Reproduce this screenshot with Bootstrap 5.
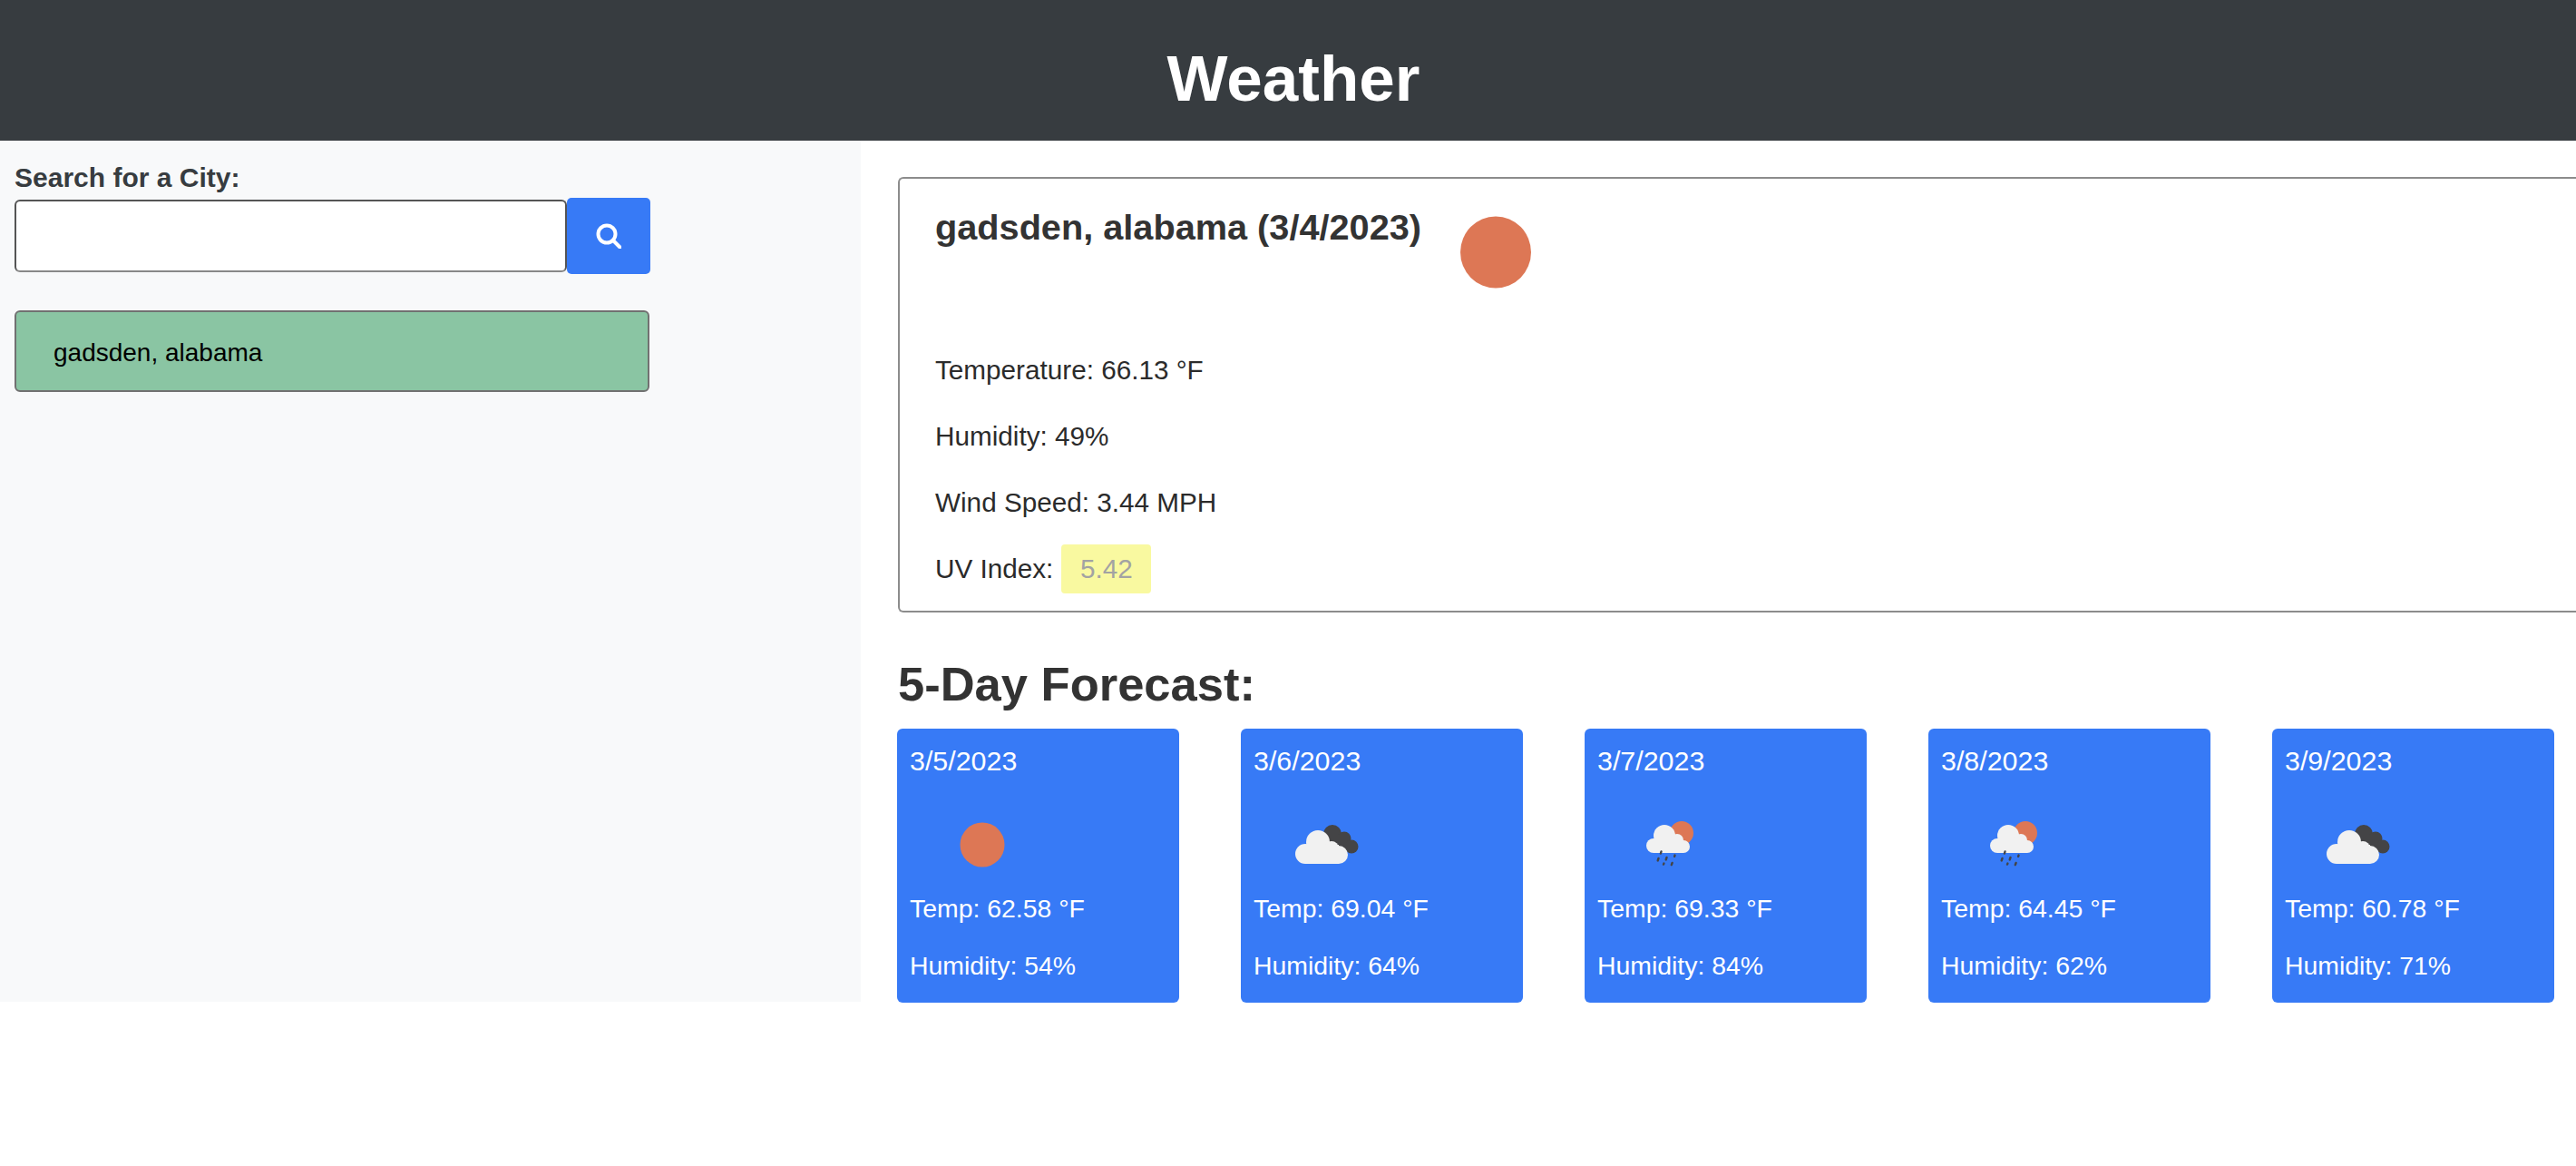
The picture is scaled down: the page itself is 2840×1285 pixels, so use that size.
<!DOCTYPE html>
<html lang="en">
<head>
  <meta charset="UTF-8" />
  <meta name="viewport" content="width=device-width, initial-scale=1.0"/>
  <title>Weather</title>
  <link href="https://cdn.jsdelivr.net/npm/bootstrap@5.3.3/dist/css/bootstrap.min.css" rel="stylesheet" />
  <style>
    body {
      font-family: "Liberation Sans", Arial, sans-serif;
      color: #333;
    }
    .app-header {
      height: 155px;
      background-color: #373c40;
      color: #fff;
      padding: 18px 0 0 12px;
    }
    .app-header h1 {
      font-size: 71px;
      font-weight: 700;
      margin: 0;
    }
    .side-panel {
      flex: 0 0 949px;
      height: 949px;
      background-color: #f8f9fa;
      padding: 24px 16px 0;
    }
    .search-label {
      font-size: 30px;
      font-weight: 700;
      line-height: 34px;
      margin: 0 0 5px;
      color: #373c40;
    }
    .search-input {
      width: 609px;
      height: 80px;
      border: 2px solid #555;
      border-bottom-color: #888;
      border-radius: 6px;
      background: #fff;
    }
    .search-btn {
      width: 92px;
      height: 84px;
      padding: 0;
      background-color: #377af6;
      border: 0;
      border-radius: 5px;
    }
    .history-item {
      width: 700px;
      height: 90px;
      margin-top: 40px;
      padding: 4px 0 0 41px;
      background-color: #8ac5a3;
      border: 2px solid #717171;
      border-radius: 6px;
      font-size: 28px;
      color: #000;
    }
    .main-panel {
      flex: 1 1 0;
      min-width: 0;
      padding: 40px 0 0 41px;
    }
    .today-box {
      height: 480px;
      padding: 26px 40px 0 39px;
      border: 2px solid #8c8c8c;
      border-right: 0;
      border-radius: 6px 0 0 6px;
      background: #fff;
    }
    .today-title {
      height: 148px;
    }
    .today-title h2 {
      font-size: 39.7px;
      font-weight: 700;
      line-height: 54px;
      margin: 0;
      width: 579px;
      color: #333;
    }
    .today-sun {
      margin-top: 15px;
    }
    .today-row {
      font-size: 29.7px;
      line-height: 40px;
      height: 73px;
      margin: 0;
      color: #2b2b2b;
      display: flex;
      align-items: center;
    }
    .uv-tag {
      display: inline-block;
      width: 99px;
      height: 54px;
      line-height: 54px;
      margin-left: 9px;
      text-align: center;
      background-color: #f9f9a0;
      color: #a3a3a3;
      border-radius: 4px;
    }
    .forecast-title {
      font-size: 52.5px;
      font-weight: 700;
      line-height: 60px;
      margin: 49px 0 0;
      color: #333;
    }
    .forecast-row {
      gap: 68px;
      margin-top: 19px;
      margin-left: -1px;
    }
    .day-box {
      width: 311px;
      height: 302px;
      padding: 18px 14px 0;
      border: 0;
      border-radius: 6px;
      background-color: #377af6;
      color: #fff;
    }
    .day-date {
      font-size: 30.4px;
      line-height: 34px;
      margin: 0;
    }
    .day-icon {
      display: block;
      margin-top: 36px;
    }
    .day-line {
      font-size: 28.4px;
      line-height: 34px;
      height: 63px;
      margin: 13px 0 -13px;
    }
  </style>
</head>
<body>
  <svg width="0" height="0" class="position-absolute">
    <defs>
      <g id="icon-sun">
        <ellipse cx="80" cy="40" rx="24.5" ry="24.5" fill="#dd7755"/>
      </g>
      <g id="icon-clouds">
        <circle cx="87" cy="28" r="10" fill="#444446"/>
        <circle cx="100" cy="33" r="7.5" fill="#444446"/>
        <circle cx="108" cy="42" r="7.5" fill="#444446"/>
        <rect x="84" y="30" width="18" height="16" fill="#444446"/>
        <g fill="#f1f1f1">
          <circle cx="57" cy="50" r="11"/>
          <circle cx="71" cy="37" r="13"/>
          <circle cx="86" cy="44" r="8"/>
          <circle cx="94" cy="51" r="10"/>
          <rect x="57" y="40" width="37" height="21"/>
        </g>
      </g>
      <g id="icon-rain">
        <circle cx="93" cy="27" r="13" fill="#dd7755"/>
        <g fill="#f1f1f1">
          <circle cx="62" cy="41" r="8"/>
          <circle cx="74" cy="30" r="12"/>
          <circle cx="88" cy="35" r="7"/>
          <circle cx="95" cy="42" r="7"/>
          <rect x="62" y="36" width="33" height="13"/>
        </g>
        <g stroke="#444446" stroke-width="2.4" stroke-linecap="round">
          <path d="M70.5 47.5l-.6 2"/>
          <path d="M67.5 55l-.8 2.4"/>
          <path d="M76.5 54l-.8 2.4"/>
          <path d="M85.5 51.6l-.4 1.2"/>
          <path d="M73.4 60.6l-.4 1"/>
          <path d="M82.6 60l-.8 2.2"/>
        </g>
      </g>
    </defs>
  </svg>

  <header class="app-header d-flex align-items-center justify-content-center">
    <h1>Weather</h1>
  </header>

  <div class="d-flex">
    <aside class="side-panel">
      <label class="search-label d-block" for="city">Search for a City:</label>
      <div class="d-flex align-items-center">
        <input id="city" class="search-input" type="text" />
        <button class="btn search-btn d-flex align-items-center justify-content-center" type="button" aria-label="Search">
          <svg width="28" height="28" viewBox="0 0 28 28" fill="none" stroke="#fff" stroke-width="4">
            <circle cx="12" cy="12" r="9.5"/>
            <path d="M19 19l7.5 7.5" stroke-linecap="round"/>
          </svg>
        </button>
      </div>
      <div class="history-item d-flex align-items-center">gadsden, alabama</div>
    </aside>

    <main class="main-panel">
      <div class="today-box">
        <div class="today-title d-flex">
          <h2>gadsden, alabama (3/4/2023)</h2>
          <svg class="today-sun" width="78" height="80" viewBox="0 0 78 80">
            <ellipse cx="39" cy="40" rx="39" ry="39.5" fill="#dd7755"/>
          </svg>
        </div>
        <p class="today-row">Temperature: 66.13 °F</p>
        <p class="today-row">Humidity: 49%</p>
        <p class="today-row">Wind Speed: 3.44 MPH</p>
        <p class="today-row">UV Index: <span class="uv-tag">5.42</span></p>
      </div>

      <h3 class="forecast-title">5-Day Forecast:</h3>

      <div class="forecast-row d-flex">
        <div class="card day-box">
          <p class="day-date">3/5/2023</p>
          <svg class="day-icon" width="160" height="80" viewBox="0 0 160 80"><use href="#icon-sun"/></svg>
          <p class="day-line">Temp: 62.58 °F</p>
          <p class="day-line">Humidity: 54%</p>
        </div>
        <div class="card day-box">
          <p class="day-date">3/6/2023</p>
          <svg class="day-icon" width="160" height="80" viewBox="0 0 160 80"><use href="#icon-clouds"/></svg>
          <p class="day-line">Temp: 69.04 °F</p>
          <p class="day-line">Humidity: 64%</p>
        </div>
        <div class="card day-box">
          <p class="day-date">3/7/2023</p>
          <svg class="day-icon" width="160" height="80" viewBox="0 0 160 80"><use href="#icon-rain"/></svg>
          <p class="day-line">Temp: 69.33 °F</p>
          <p class="day-line">Humidity: 84%</p>
        </div>
        <div class="card day-box">
          <p class="day-date">3/8/2023</p>
          <svg class="day-icon" width="160" height="80" viewBox="0 0 160 80"><use href="#icon-rain"/></svg>
          <p class="day-line">Temp: 64.45 °F</p>
          <p class="day-line">Humidity: 62%</p>
        </div>
        <div class="card day-box">
          <p class="day-date">3/9/2023</p>
          <svg class="day-icon" width="160" height="80" viewBox="0 0 160 80"><use href="#icon-clouds"/></svg>
          <p class="day-line">Temp: 60.78 °F</p>
          <p class="day-line">Humidity: 71%</p>
        </div>
      </div>
    </main>
  </div>
</body>
</html>
